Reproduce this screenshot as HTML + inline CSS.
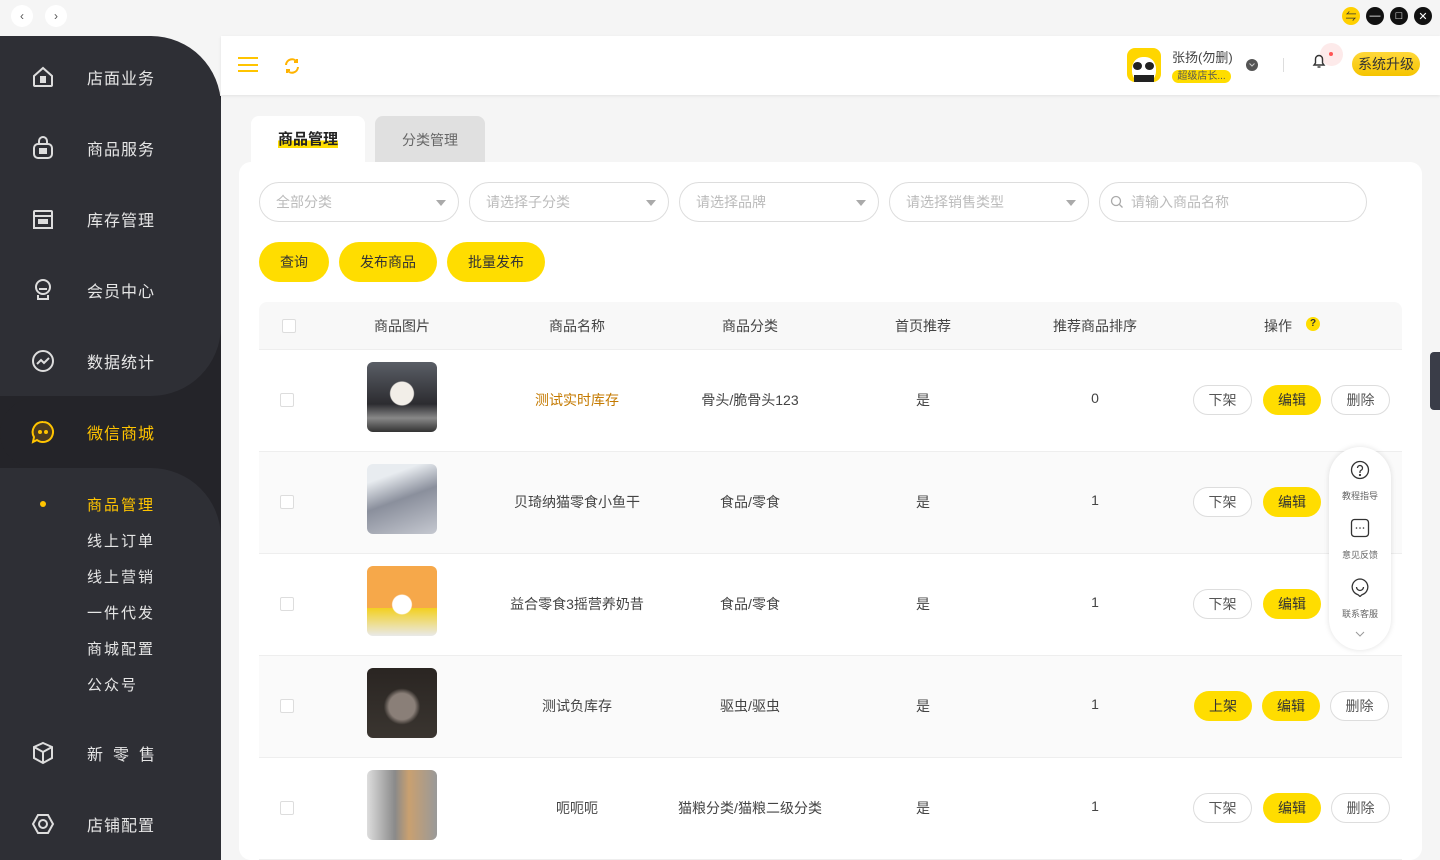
<!DOCTYPE html>
<html><head><meta charset="utf-8"><style>
*{box-sizing:border-box;margin:0;padding:0}
body{width:1440px;height:860px;overflow:hidden;background:#f5f5f5;font-family:"Liberation Sans","Noto Sans CJK SC",sans-serif;position:relative;color:#333}
.abs{position:absolute}
.tb{left:0;top:0;width:1440px;height:36px;background:#f5f5f5}
.nav{width:22px;height:22px;border-radius:50%;background:#fff;top:5px;display:flex;align-items:center;justify-content:center;font-size:12px;color:#555}
.wc{width:18px;height:18px;border-radius:50%;top:7px;background:#111;color:#fff;font-size:11px;display:flex;align-items:center;justify-content:center}
.side{left:0;top:36px;width:221px;height:824px;background:#242429}
.p1{left:0;top:36px;width:221px;height:360px;background:#2e2f35;border-radius:0 70px 70px 0}
.p1c{left:0;top:36px;width:221px;height:60px;background:#f5f5f5}
.act{left:0;top:398px;width:221px;height:70px;background:#242429;border-radius:35px 0 0 35px}
.p2{left:0;top:468px;width:221px;height:392px;background:#2e2f35;border-radius:0 70px 0 0}
.mi{left:30px;width:180px;height:30px;display:flex;align-items:center;color:#e6e6e6;font-size:16px;letter-spacing:1px}
.mi svg{width:26px;height:26px;margin-right:31px}
.si{left:87px;color:#e6e6e6;font-size:15px;letter-spacing:2px}
.hdr{left:221px;top:36px;width:1219px;height:59px;background:#fff;box-shadow:0 1px 3px rgba(0,0,0,.08)}
.card{left:239px;top:162px;width:1183px;height:698px;background:#fff;border-radius:12px}
.tab1{left:251px;top:116px;width:114px;height:50px;background:#fff;border-radius:8px 8px 0 0;font-size:15px;font-weight:bold;color:#222;text-align:center;line-height:48px}
.tab2{left:375px;top:116px;width:110px;height:46px;background:#e0e0e0;border-radius:8px 8px 0 0;font-size:14px;color:#666;text-align:center;line-height:48px}
.sel{top:182px;width:200px;height:40px;border:1px solid #ddd;border-radius:20px;font-size:14px;color:#bbb;padding-left:16px;line-height:38px}
.sel:after{content:"";position:absolute;right:12px;top:17px;border:5px solid transparent;border-top:6px solid #aaa}
.yb{top:242px;height:40px;border-radius:20px;background:#ffdd00;font-size:14px;color:#333;text-align:center;line-height:40px}
.th{left:259px;top:302px;width:1143px;height:48px;background:#f8f8f8;border-radius:8px 8px 0 0;border-bottom:1px solid #eee}
.c{position:absolute;transform:translateX(-50%);white-space:nowrap;font-size:14px;color:#444}
.row{left:259px;width:1143px;height:102px;border-bottom:1px solid #eee}
.cb{position:absolute;width:14px;height:14px;border:1px solid #ddd;border-radius:2px;background:#fff}
.img{position:absolute;left:108px;top:12px;width:70px;height:70px;border-radius:6px}
.bt{position:absolute;top:35px;height:30px;border-radius:15px;font-size:14px;text-align:center;line-height:28px}
.wb{border:1px solid #ddd;color:#555;background:#fff;width:59px}
.yb2{background:#ffdd00;color:#333;width:58px;line-height:30px}
</style></head><body>
<div class="abs tb"></div>
<div class="abs nav" style="left:11px">&#8249;</div>
<div class="abs nav" style="left:45px">&#8250;</div>
<div class="abs wc" style="left:1342px;background:#ffd000;color:#333">&#8651;</div>
<div class="abs wc" style="left:1366px">&#8212;</div>
<div class="abs wc" style="left:1390px">&#9633;</div>
<div class="abs wc" style="left:1414px">&#10005;</div>

<div class="abs side"></div>
<div class="abs p1c"></div>
<div class="abs p1"></div>
<div class="abs act"></div>
<div class="abs p2"></div>

<div class="abs mi" style="top:62px"><svg viewBox="0 0 26 26" fill="none" stroke="#ddd" stroke-width="2"><path d="M4 12L13 4l9 8v9a1 1 0 0 1-1 1H5a1 1 0 0 1-1-1z"/><rect x="11" y="13" width="4" height="5" fill="#ddd"/></svg>店面业务</div>
<div class="abs mi" style="top:133px"><svg viewBox="0 0 26 26" fill="none" stroke="#ddd" stroke-width="2"><rect x="4" y="9" width="18" height="14" rx="4"/><path d="M9 9V6a4 4 0 0 1 8 0v3"/><rect x="10" y="14" width="6" height="4" fill="#ddd"/></svg>商品服务</div>
<div class="abs mi" style="top:204px"><svg viewBox="0 0 26 26" fill="none" stroke="#ddd" stroke-width="2"><rect x="4" y="5" width="18" height="5" rx="1"/><rect x="4" y="10" width="18" height="12"/><rect x="9" y="14" width="8" height="3" fill="#ddd"/></svg>库存管理</div>
<div class="abs mi" style="top:275px"><svg viewBox="0 0 26 26" fill="none" stroke="#ddd" stroke-width="2"><circle cx="13" cy="10" r="7"/><path d="M8 18v4h10v-4"/><path d="M9 12h8" /></svg>会员中心</div>
<div class="abs mi" style="top:346px"><svg viewBox="0 0 26 26" fill="none" stroke="#ddd" stroke-width="2"><circle cx="13" cy="13" r="10"/><path d="M7 16l4-4 3 3 5-5"/></svg>数据统计</div>
<div class="abs mi" style="top:417px;color:#ffc400"><svg viewBox="0 0 26 26" fill="none" stroke="#ffc400" stroke-width="2"><path d="M13 3a10 10 0 1 1-6 18l-4 2 1-5A10 10 0 0 1 13 3z" fill="#4a3a20"/><circle cx="10" cy="13" r="1" fill="#ffc400"/><circle cx="16" cy="13" r="1" fill="#ffc400"/></svg>微信商城</div>
<div class="abs" style="left:40px;top:501px;width:6px;height:6px;border-radius:50%;background:#ffc400"></div>
<div class="abs si" style="top:494px;color:#ffc400">商品管理</div>
<div class="abs si" style="top:530px">线上订单</div>
<div class="abs si" style="top:566px">线上营销</div>
<div class="abs si" style="top:602px">一件代发</div>
<div class="abs si" style="top:638px">商城配置</div>
<div class="abs si" style="top:674px">公众号</div>
<div class="abs mi" style="top:738px;letter-spacing:10px"><svg viewBox="0 0 26 26" fill="none" stroke="#ddd" stroke-width="2"><path d="M13 3l9 4v11l-9 5-9-5V7z"/><path d="M4 7l9 5 9-5M13 12v11"/></svg>新零售</div>
<div class="abs mi" style="top:809px"><svg viewBox="0 0 26 26" fill="none" stroke="#ddd" stroke-width="2"><path d="M8 4h10l5 9-5 9H8l-5-9z"/><circle cx="13" cy="13" r="4"/></svg>店铺配置</div>

<div class="abs hdr"></div>
<div class="abs" style="left:238px;top:57px;width:20px;height:15px;border-top:2px solid #ffc400;border-bottom:2px solid #ffc400"><div style="margin-top:4.5px;height:2px;background:#ffc400"></div></div>
<svg class="abs" style="left:283px;top:57px" width="18" height="18" viewBox="0 0 18 18" fill="none" stroke="#ffb300" stroke-width="2"><path d="M3 8a6 6 0 0 1 11-3M15 10a6 6 0 0 1-11 3"/><path d="M14 2v3h-3M4 16v-3h3"/></svg>
<div class="abs" style="left:1127px;top:48px;width:34px;height:34px;border-radius:8px;background:#ffd600;overflow:hidden">
<div style="position:absolute;left:5px;top:9px;width:24px;height:26px;border-radius:45%;background:#fff"></div>
<div style="position:absolute;left:6px;top:14px;width:9px;height:8px;border-radius:50%;background:#222"></div>
<div style="position:absolute;left:18px;top:14px;width:9px;height:8px;border-radius:50%;background:#222"></div>
<div style="position:absolute;left:7px;top:27px;width:20px;height:8px;background:#222"></div></div>
<div class="abs" style="left:1172px;top:47px;font-size:13px;color:#444">张扬(勿删)</div>
<div class="abs" style="left:1172px;top:70px;width:59px;height:13px;border-radius:7px;background:#ffdd00;font-size:10px;color:#555;line-height:13px;text-align:center">超级店长...</div>
<div class="abs" style="left:1246px;top:59px;width:12px;height:12px;border-radius:50%;background:#555"><svg style="position:absolute;left:3px;top:4px" width="6" height="4" viewBox="0 0 6 4" fill="none" stroke="#ccc"><path d="M0.5 0.5l2.5 2.5 2.5-2.5"/></svg></div>
<div class="abs" style="left:1283px;top:58px;width:1px;height:14px;background:#ddd"></div>
<div class="abs" style="left:1320px;top:43px;width:23px;height:23px;border-radius:50%;background:#fdeaea"></div>
<div class="abs" style="left:1329px;top:52px;width:4px;height:4px;border-radius:50%;background:#f55"></div>
<svg class="abs" style="left:1312px;top:53px" width="14" height="16" viewBox="0 0 14 16" fill="none" stroke="#333" stroke-width="1.4"><path d="M2 12h10l-1.5-2V6a3.5 3.5 0 0 0-7 0v4z"/><path d="M5.5 14h3"/></svg>
<div class="abs" style="left:1352px;top:52px;width:68px;height:24px;border-radius:12px;background:linear-gradient(#ffd83a,#f5c400);font-size:14px;color:#333;text-align:center;line-height:24px">系统升级</div>

<div class="abs card"></div>
<div class="abs tab2">分类管理</div>
<div class="abs tab1"><span style="background:linear-gradient(transparent 55%,#ffdd00 55%)">商品管理</span></div>

<div class="abs sel" style="left:259px">全部分类</div>
<div class="abs sel" style="left:469px">请选择子分类</div>
<div class="abs sel" style="left:679px">请选择品牌</div>
<div class="abs sel" style="left:889px">请选择销售类型</div>
<div class="abs" style="left:1099px;top:182px;width:268px;height:40px;border:1px solid #ddd;border-radius:20px;font-size:14px;color:#bbb;padding-left:31px;line-height:38px">请输入商品名称
<svg style="position:absolute;left:10px;top:12px" width="14" height="14" viewBox="0 0 14 14" fill="none" stroke="#aaa" stroke-width="1.3"><circle cx="6" cy="6" r="4.5"/><path d="M9.5 9.5l3 3"/></svg></div>
<div class="abs yb" style="left:259px;width:70px">查询</div>
<div class="abs yb" style="left:339px;width:98px">发布商品</div>
<div class="abs yb" style="left:447px;width:98px">批量发布</div>

<div class="abs th">
<div class="cb" style="left:23px;top:17px"></div>
<div class="c" style="left:143px;top:14px">商品图片</div>
<div class="c" style="left:318px;top:14px">商品名称</div>
<div class="c" style="left:491px;top:14px">商品分类</div>
<div class="c" style="left:664px;top:14px">首页推荐</div>
<div class="c" style="left:836px;top:14px">推荐商品排序</div>
<div class="c" style="left:1019px;top:14px">操作</div>
<div style="position:absolute;left:1047px;top:15px;width:14px;height:14px;border-radius:50%;background:#ffdd00;font-size:10px;text-align:center;line-height:14px;font-weight:bold">?</div>
</div>

<div class="abs row" style="top:350px;background:#fff">
<div class="cb" style="left:21px;top:43px"></div>
<div class="img" style="background:radial-gradient(circle at 50% 45%,#f2eee8 0 22%,transparent 24%),linear-gradient(#5a5e66,#2c2c30 60%,#888 80%,#333)"></div>
<div class="c" style="left:318px;top:40px;color:#c47a00">测试实时库存</div>
<div class="c" style="left:491px;top:40px">骨头/脆骨头123</div>
<div class="c" style="left:664px;top:40px">是</div>
<div class="c" style="left:836px;top:40px">0</div>
<div class="bt wb" style="left:934px">下架</div><div class="bt yb2" style="left:1004px">编辑</div><div class="bt wb" style="left:1072px">删除</div>
</div>
<div class="abs row" style="top:452px;background:#fafafa">
<div class="cb" style="left:21px;top:43px"></div>
<div class="img" style="background:linear-gradient(160deg,#e8ecf0 20%,#8a8f9c 50%,#c5c8d0)"></div>
<div class="c" style="left:318px;top:40px">贝琦纳猫零食小鱼干</div>
<div class="c" style="left:491px;top:40px">食品/零食</div>
<div class="c" style="left:664px;top:40px">是</div>
<div class="c" style="left:836px;top:40px">1</div>
<div class="bt wb" style="left:934px">下架</div><div class="bt yb2" style="left:1004px">编辑</div>
</div>
<div class="abs row" style="top:554px;background:#fff">
<div class="cb" style="left:21px;top:43px"></div>
<div class="img" style="background:radial-gradient(circle at 50% 55%,#fff 0 18%,transparent 20%),linear-gradient(#f6a84a 60%,#f3d020 60%,#e9e9e9)"></div>
<div class="c" style="left:318px;top:40px">益合零食3摇营养奶昔</div>
<div class="c" style="left:491px;top:40px">食品/零食</div>
<div class="c" style="left:664px;top:40px">是</div>
<div class="c" style="left:836px;top:40px">1</div>
<div class="bt wb" style="left:934px">下架</div><div class="bt yb2" style="left:1004px">编辑</div>
</div>
<div class="abs row" style="top:656px;background:#fafafa">
<div class="cb" style="left:21px;top:43px"></div>
<div class="img" style="background:radial-gradient(circle at 50% 55%,#8a7f78 0 25%,transparent 35%),linear-gradient(#2a2522,#3a3530)"></div>
<div class="c" style="left:318px;top:40px">测试负库存</div>
<div class="c" style="left:491px;top:40px">驱虫/驱虫</div>
<div class="c" style="left:664px;top:40px">是</div>
<div class="c" style="left:836px;top:40px">1</div>
<div class="bt yb2" style="left:935px">上架</div><div class="bt yb2" style="left:1003px">编辑</div><div class="bt wb" style="left:1071px">删除</div>
</div>
<div class="abs row" style="top:758px;background:#fff">
<div class="cb" style="left:21px;top:43px"></div>
<div class="img" style="background:linear-gradient(90deg,#ddd,#8a8a8a 40%,#c9a070 60%,#999)"></div>
<div class="c" style="left:318px;top:40px">呃呃呃</div>
<div class="c" style="left:491px;top:40px">猫粮分类/猫粮二级分类</div>
<div class="c" style="left:664px;top:40px">是</div>
<div class="c" style="left:836px;top:40px">1</div>
<div class="bt wb" style="left:934px">下架</div><div class="bt yb2" style="left:1004px">编辑</div><div class="bt wb" style="left:1072px">删除</div>
</div>

<div class="abs" style="left:1329px;top:447px;width:62px;height:203px;border-radius:31px;background:#fff;box-shadow:0 0 6px rgba(0,0,0,.12)">
<svg style="position:absolute;left:21px;top:13px" width="20" height="20" viewBox="0 0 20 20" fill="none" stroke="#333" stroke-width="1.3"><circle cx="10" cy="10" r="8.5"/><path d="M7.5 8a2.5 2.5 0 1 1 3.5 2.3c-.7.3-1 .8-1 1.5V13"/><circle cx="10" cy="15" r=".5" fill="#333"/></svg>
<div style="position:absolute;top:42px;width:62px;text-align:center;font-size:9px;color:#666">教程指导</div>
<svg style="position:absolute;left:21px;top:71px" width="20" height="20" viewBox="0 0 20 20" fill="none" stroke="#333" stroke-width="1.3"><rect x="1.5" y="1.5" width="17" height="17" rx="3"/><circle cx="6.5" cy="10" r=".8" fill="#333" stroke="none"/><circle cx="10" cy="10" r=".8" fill="#333" stroke="none"/><circle cx="13.5" cy="10" r=".8" fill="#333" stroke="none"/></svg>
<div style="position:absolute;top:101px;width:62px;text-align:center;font-size:9px;color:#666">意见反馈</div>
<svg style="position:absolute;left:21px;top:130px" width="20" height="20" viewBox="0 0 20 20" fill="none" stroke="#333" stroke-width="1.3"><path d="M10 2a8 8 0 0 1 2 15.7L10 19.5 8 17.7A8 8 0 0 1 10 2z"/><path d="M6.5 10a3.5 3.5 0 0 0 7 0"/></svg>
<div style="position:absolute;top:160px;width:62px;text-align:center;font-size:9px;color:#666">联系客服</div>
<svg style="position:absolute;left:26px;top:184px" width="10" height="6" viewBox="0 0 10 6" fill="none" stroke="#999"><path d="M1 1l4 4 4-4"/></svg>
</div>
<div class="abs" style="left:1430px;top:352px;width:10px;height:58px;border-radius:4px 0 0 4px;background:#3a3d48"></div>
</body></html>
